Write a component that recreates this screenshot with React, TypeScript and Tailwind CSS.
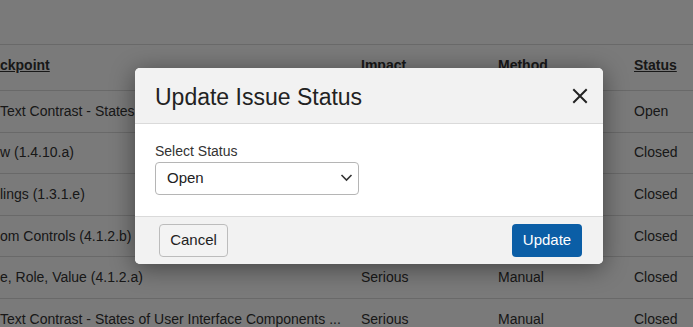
import React, { useState } from "react";

interface IssueRow {
  checkpoint: string;
  impact: string;
  method: string;
  status: string;
}

const rows: IssueRow[] = [
  { checkpoint: "Text Contrast - States", impact: "", method: "", status: "Open" },
  { checkpoint: "w (1.4.10.a)", impact: "", method: "", status: "Closed" },
  { checkpoint: "lings (1.3.1.e)", impact: "", method: "", status: "Closed" },
  { checkpoint: "om Controls (4.1.2.b)", impact: "", method: "", status: "Closed" },
  { checkpoint: "e, Role, Value (4.1.2.a)", impact: "Serious", method: "Manual", status: "Closed" },
  {
    checkpoint: "Text Contrast - States of User Interface Components ...",
    impact: "Serious",
    method: "Manual",
    status: "Closed",
  },
];

const App: React.FC = () => {
  const [status, setStatus] = useState<string>("Open");

  return (
    <div
      className="relative w-[693px] h-[327px] overflow-hidden bg-white text-[#333]"
      style={{ fontFamily: '"Liberation Sans", Arial, sans-serif' }}
    >
      {/* Issues table behind the dialog */}
      <div className="pt-[44px]">
        <div className="border-t border-[#dcdcdc]">
          <div className="grid grid-cols-[361px_137px_136px_1fr] h-[46px] pb-[4px] items-center border-b border-[#dcdcdc] text-[14px] font-bold">
            <span className="underline">ckpoint</span>
            <span className="underline">Impact</span>
            <span className="underline">Method</span>
            <span className="underline">Status</span>
          </div>
          {rows.map((row, index) => (
            <div
              key={index}
              className="grid grid-cols-[361px_137px_136px_1fr] h-[41.6px] items-center border-b border-[#dcdcdc] text-[14px]"
            >
              <span className="whitespace-nowrap">{row.checkpoint}</span>
              <span>{row.impact}</span>
              <span>{row.method}</span>
              <span>{row.status}</span>
            </div>
          ))}
        </div>
      </div>

      {/* Overlay */}
      <div className="absolute inset-0 bg-black/[0.52]" />

      {/* Dialog */}
      <div className="absolute left-[135px] top-[68px] w-[468px] rounded-[5px] bg-white overflow-hidden shadow-[0_4px_24px_rgba(0,0,0,0.45)]">
        <div className="flex items-center justify-between h-[56px] pl-[20px] pr-[12px] bg-[#f2f2f2] border-b border-[#dadada]">
          <h2 className="text-[23px] text-[#222] mt-[4px]">Update Issue Status</h2>
          <button className="w-[22px] h-[22px] flex items-center justify-center text-[#222]" aria-label="Close">
            <svg width="16" height="16" viewBox="0 0 16 16" fill="none" stroke="currentColor" strokeWidth="2" strokeLinecap="square">
              <path d="M2 2L14 14M14 2L2 14" />
            </svg>
          </button>
        </div>

        <div className="h-[92px] px-[20px] pt-[19px] bg-white">
          <label className="block text-[14px] text-[#333] leading-[16px] mb-[3px]">Select Status</label>
          <div className="relative w-[204px]">
            <select
              value={status}
              onChange={(e) => setStatus(e.target.value)}
              className="appearance-none w-full h-[33px] pl-[11px] pr-[30px] border border-[#b5b5b5] rounded-[4px] bg-white text-[15px] text-[#222]"
            >
              <option>Open</option>
              <option>Closed</option>
            </select>
            <svg
              className="absolute right-[6px] top-[11px] pointer-events-none text-[#333]"
              width="13"
              height="9"
              viewBox="0 0 13 9"
              fill="none"
              stroke="currentColor"
              strokeWidth="1.6"
            >
              <path d="M1.5 2L6.5 7L11.5 2" />
            </svg>
          </div>
        </div>

        <div className="flex items-center justify-between h-[48px] pl-[24px] pr-[21px] bg-[#f2f2f2] border-t border-[#dadada]">
          <button className="w-[69px] h-[33px] rounded-[4px] border border-[#bcbcbc] bg-[#f3f3f3] text-[15px] text-[#222]">
            Cancel
          </button>
          <button className="w-[70px] h-[33px] rounded-[4px] bg-[#0b5ea6] text-[15px] text-white">
            Update
          </button>
        </div>
      </div>
    </div>
  );
};

export default App;
